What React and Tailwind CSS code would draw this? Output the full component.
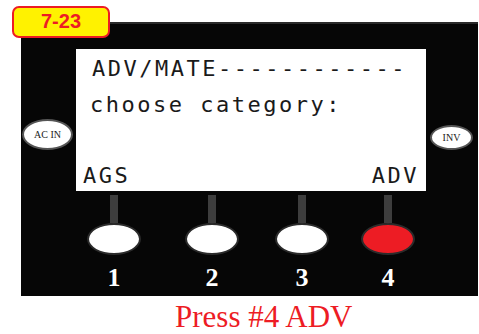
export default function App() {
  const buttons = [
    { n: "1", ml: "ml-[63px]", red: false },
    { n: "2", ml: "ml-[38px]", red: false },
    { n: "3", ml: "ml-[30px]", red: false },
    { n: "4", ml: "ml-[26px]", red: true },
  ];
  return (
    <div className="relative w-[479px] h-[334px] bg-white overflow-hidden">
      <div className="absolute left-[12px] top-[6px] w-[98px] h-[32px] rounded-[7px] border-2 border-[#ed1c24] bg-[#fff200] flex items-center justify-center z-10">
        <span className="text-[20px] leading-[20px] font-bold text-[#ed1c24] -mt-[3px]" style={{ fontFamily: '"Liberation Sans", Arial, sans-serif' }}>
          7-23
        </span>
      </div>
      <div className="ml-[21px] mt-[22px] w-[457px] h-[274px] bg-[#060606] border-t-2 border-[#2a2a2a] flex flex-col">
        <div className="flex flex-row pt-[25px]">
          <div className="w-[55px] flex justify-start">
            <div className="ml-[1px] mt-[70px] w-[51px] h-[31px] rounded-[50%] bg-white border-2 border-[#555] flex items-center justify-center">
              <span className="text-[10px] leading-[10px] text-[#222]" style={{ fontFamily: '"Liberation Serif", "Times New Roman", serif' }}>AC IN</span>
            </div>
          </div>
          <div
            className="w-[350px] h-[142px] bg-white flex flex-col text-[22px] leading-[22px] text-[#1a1a1a] tracking-[2.5px]"
            style={{ fontFamily: '"DejaVu Sans Mono", monospace' }}
          >
            <div className="pl-[16px] pt-[9px] whitespace-pre">ADV/MATE------------</div>
            <div className="pl-[14px] mt-[14px] whitespace-pre">choose category:</div>
            <div className="flex-1" />
            <div className="flex justify-between pl-[7px] pr-[7px] pb-[4px]">
              <span>AGS</span>
              <span>ADV</span>
            </div>
          </div>
          <div className="flex-1 flex justify-start">
            <div className="ml-[4px] mt-[76px] w-[43px] h-[25px] rounded-[50%] bg-white border-2 border-[#555] flex items-center justify-center">
              <span className="text-[10px] leading-[10px] text-[#222]" style={{ fontFamily: '"Liberation Serif", "Times New Roman", serif' }}>INV</span>
            </div>
          </div>
        </div>
        <div className="flex flex-row mt-[4px]">
          {buttons.map((b) => (
            <div key={b.n} className={`${b.ml} w-[60px] flex flex-col items-center`}>
              <div className="w-[8px] h-[28px] bg-[#3d3d3d]" />
              <div
                className={`w-[54px] h-[32px] rounded-[50%] border-2 ${b.red ? "border-[#2b2b2b] bg-[#ed1c24]" : "border-[#2b2b2b] bg-white"}`}
              />
              <div
                className="mt-[10px] text-[26px] leading-[26px] font-bold text-white"
                style={{ fontFamily: '"Liberation Serif", "Times New Roman", serif' }}
              >
                {b.n}
              </div>
            </div>
          ))}
        </div>
      </div>
      <div
        className="pl-[175px] mt-[5px] text-[31px] leading-[31px] text-[#ed1c24] whitespace-pre"
        style={{ fontFamily: '"Liberation Serif", "Times New Roman", serif' }}
      >
        Press #4 ADV
      </div>
    </div>
  );
}
